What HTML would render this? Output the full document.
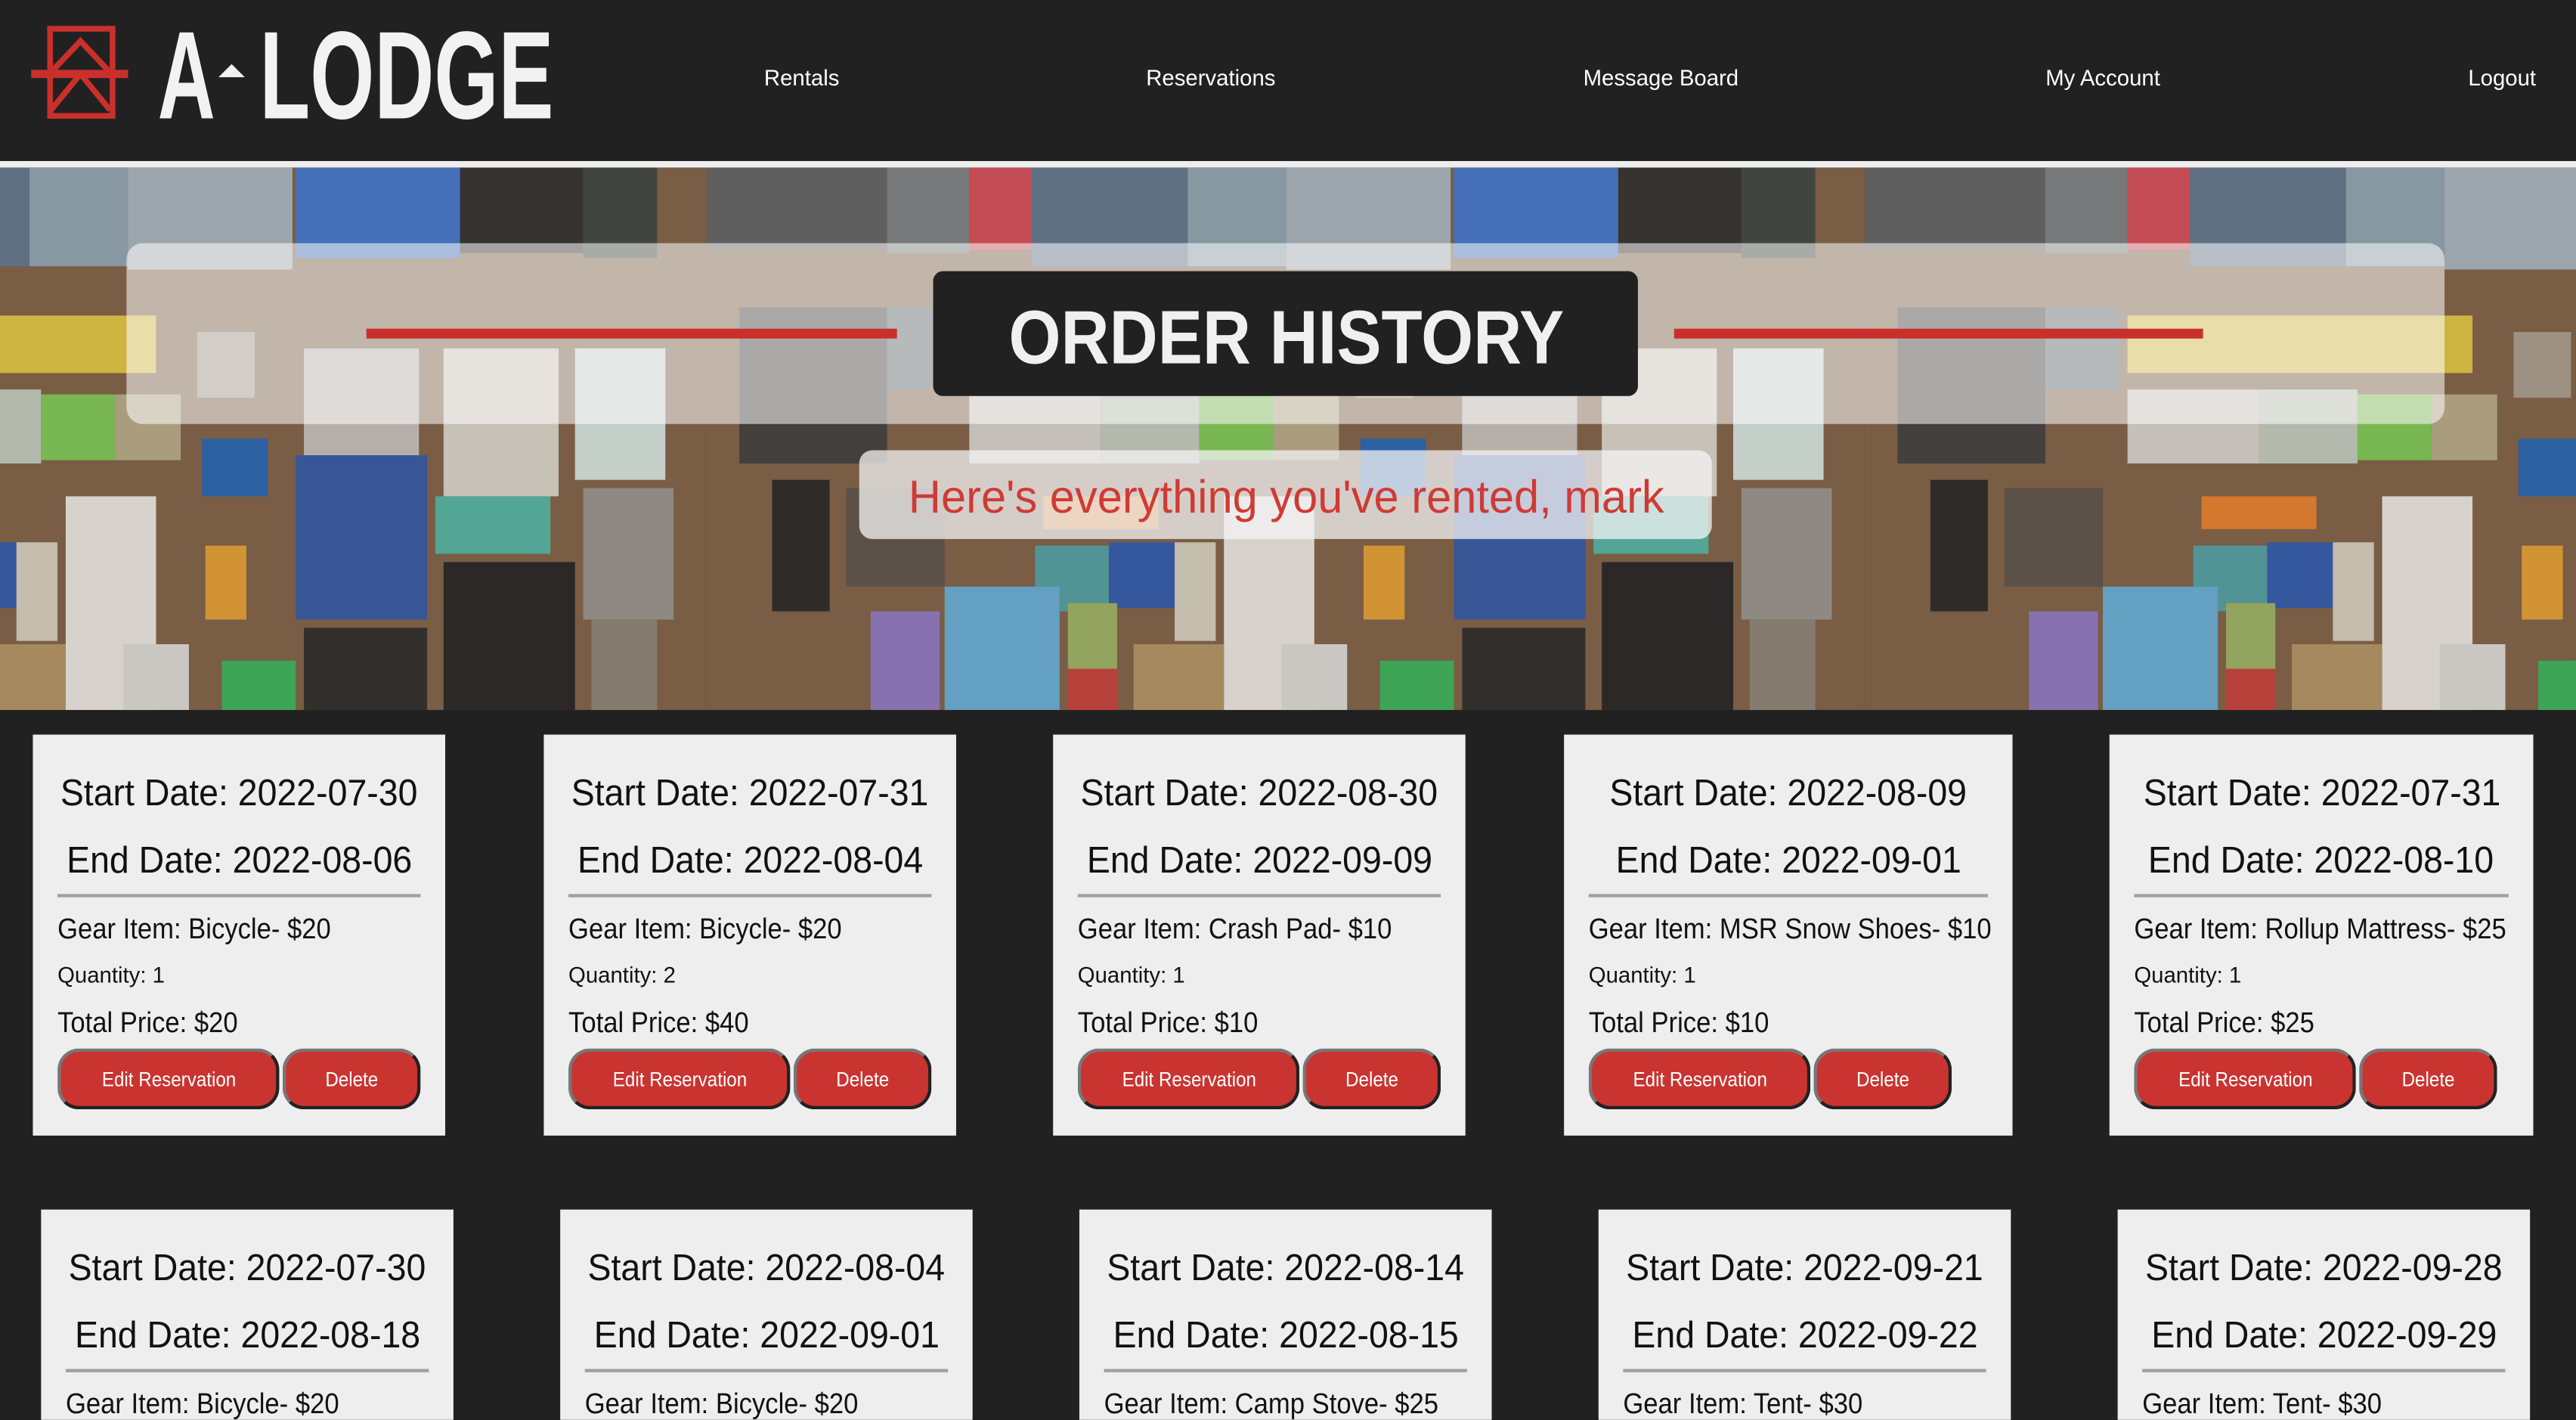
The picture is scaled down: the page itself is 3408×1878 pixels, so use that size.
<!DOCTYPE html>
<html><head><meta charset="utf-8">
<style>
html,body{margin:0;padding:0;background:#212121;overflow:hidden;width:3408px;height:1878px}
#w{position:absolute;left:0;top:0;width:1568px;height:864px;transform:scale(2.173469);transform-origin:0 0;background:#212121;font-family:"Liberation Sans",sans-serif;overflow:hidden}
.nav{position:absolute;top:40px;color:#fff;font-family:"Liberation Sans",sans-serif;font-size:13.5px;transform:translateX(-50%);white-space:nowrap}
.card{position:absolute;background:#eeeeee;box-sizing:border-box;padding:0 15px;color:#111;overflow:hidden}
.s{display:inline-block;transform:scaleX(.91);transform-origin:0 50%;white-space:nowrap}
.card .d{display:flex;justify-content:center;font-size:22.5px;line-height:22px;white-space:nowrap}
.card .d .s{transform:scaleX(.95);transform-origin:50% 50%}
.card .d1{margin-top:25px}
.card .d2{margin-top:19px}
.card hr{border:0;border-top:2px solid #a0a0a0;margin:9px 0 0 0}
.card .g{font-size:17.5px;margin-top:9px;line-height:20px;white-space:nowrap}
.card .q{font-size:13.5px;margin-top:11px;line-height:16px}
.card .t{font-size:17.5px;margin-top:10px;line-height:20px}
.btns{margin-top:6px;display:flex;gap:2px}
.b{height:37px;box-sizing:border-box;background:#c93431;color:#fff;font-size:12.5px;display:flex;align-items:center;justify-content:center;border-radius:13px;border:2px solid #222;border-top-color:#777;border-left-color:#777}
.b .s{transform:scaleX(.89);transform-origin:50% 50%}
.e{width:135px}.x{width:84px}
</style></head><body><div id="w">
<svg style="position:absolute;left:0;top:0" width="360" height="98">
 <g fill="none" stroke="#c9302c" stroke-width="3.5">
  <rect x="30.5" y="17.5" width="38" height="53"/>
  <polyline points="31,44 49,25 67,44"/>
  <polyline points="31,67 49,45 67,67"/>
 </g>
 <rect x="19" y="42.5" width="59" height="5" fill="#c9302c"/>
 <text x="96" y="72" fill="#f2f2f2" font-family="Liberation Sans,sans-serif" font-weight="bold" font-size="76" textLength="35" lengthAdjust="spacingAndGlyphs">A</text>
 <polygon points="133,47 141,39 149,47" fill="#f2f2f2"/>
 <text x="158" y="72" fill="#f2f2f2" font-family="Liberation Sans,sans-serif" font-weight="bold" font-size="76" textLength="179" lengthAdjust="spacingAndGlyphs">LODGE</text>
</svg>
<div class="nav" style="left:488px">Rentals</div>
<div class="nav" style="left:737px">Reservations</div>
<div class="nav" style="left:1011px">Message Board</div>
<div class="nav" style="left:1280px">My Account</div>
<div class="nav" style="left:1523px">Logout</div>
<div style="position:absolute;left:0;top:98px;width:1568px;height:4px;background:#eeeeee"></div>
<svg style="position:absolute;left:0;top:102px" width="1568" height="330">
 <defs>
  <g id="tile">
   <rect x="0" y="0" width="705" height="330" fill="#7d5f45"/>
   <rect x="0" y="0" width="110" height="50" fill="#5d6166"/>
   <rect x="110" y="0" width="50" height="52" fill="#7b7f84"/>
   <rect x="160" y="0" width="38" height="50" fill="#d84a57"/>
   <rect x="198" y="0" width="95" height="60" fill="#5f7690"/>
   <rect x="293" y="0" width="60" height="60" fill="#8fa6b8"/>
   <rect x="353" y="0" width="100" height="62" fill="#a9b8c4"/>
   <rect x="455" y="0" width="100" height="55" fill="#3f74d4"/>
   <rect x="555" y="0" width="75" height="52" fill="#2b2b2d"/>
   <rect x="630" y="0" width="45" height="55" fill="#38433e"/>
   <rect x="20" y="85" width="90" height="95" fill="#3c3b3c"/>
   <rect x="110" y="85" width="45" height="50" fill="#5d6b70"/>
   <rect x="160" y="90" width="210" height="35" fill="#e4c93f"/>
   <rect x="160" y="135" width="80" height="45" fill="#d8d6d2"/>
   <rect x="240" y="135" width="60" height="45" fill="#c4cfc2"/>
   <rect x="300" y="138" width="45" height="40" fill="#7ccc55"/>
   <rect x="345" y="138" width="40" height="40" fill="#b9ac8a"/>
   <rect x="40" y="190" width="35" height="80" fill="#222"/>
   <rect x="85" y="195" width="60" height="60" fill="#5a5048"/>
   <rect x="205" y="200" width="70" height="20" fill="#ec7e2a"/>
   <rect x="200" y="230" width="45" height="40" fill="#4ea0a8"/>
   <rect x="245" y="228" width="40" height="40" fill="#2a57b0"/>
   <rect x="285" y="228" width="25" height="60" fill="#d8d2c4"/>
   <rect x="315" y="200" width="55" height="130" fill="#efeeea"/>
   <rect x="100" y="270" width="42" height="60" fill="#8f77c8"/>
   <rect x="145" y="255" width="70" height="75" fill="#62b0dc"/>
   <rect x="220" y="265" width="30" height="40" fill="#9cb562"/>
   <rect x="220" y="305" width="30" height="25" fill="#c83c38"/>
   <rect x="260" y="290" width="55" height="40" fill="#b59466"/>
   <rect x="350" y="290" width="40" height="40" fill="#e0e0de"/>
   <rect x="395" y="100" width="35" height="40" fill="#a99e92"/>
   <rect x="398" y="165" width="40" height="35" fill="#2062b8"/>
   <rect x="400" y="230" width="25" height="45" fill="#e8a030"/>
   <rect x="410" y="300" width="45" height="30" fill="#35b55a"/>
   <rect x="460" y="110" width="70" height="70" fill="#c8c4c0"/>
   <rect x="455" y="175" width="80" height="100" fill="#2e55a8"/>
   <rect x="460" y="280" width="75" height="50" fill="#262628"/>
   <rect x="545" y="110" width="70" height="90" fill="#dcd8d0"/>
   <rect x="540" y="200" width="70" height="35" fill="#4fb7a8"/>
   <rect x="545" y="240" width="80" height="90" fill="#1e1e20"/>
   <rect x="625" y="110" width="55" height="80" fill="#d9eae6"/>
   <rect x="630" y="195" width="55" height="80" fill="#979590"/>
   <rect x="635" y="275" width="40" height="55" fill="#8c8478"/>
  </g>
 </defs>
 <use href="#tile" x="-275"/>
 <use href="#tile" x="430"/>
 <use href="#tile" x="1135"/>
 <rect x="0" y="0" width="1568" height="330" fill="#6b5a4a" fill-opacity="0.18"/>
 <rect x="77" y="46" width="1411" height="110" rx="10" fill="#fff" fill-opacity="0.55"/>
 <rect x="223" y="98" width="323" height="6" fill="#c9302c"/>
 <rect x="1019" y="98" width="322" height="6" fill="#c9302c"/>
 <rect x="568" y="63" width="429" height="76" rx="6" fill="#212121"/>
 <text x="783" y="119" text-anchor="middle" fill="#f0f0f0" font-family="Liberation Sans,sans-serif" font-weight="bold" font-size="46" textLength="338" lengthAdjust="spacingAndGlyphs">ORDER HISTORY</text>
 <rect x="523" y="172" width="519" height="54" rx="8" fill="#f4f4f4" fill-opacity="0.75"/>
 <text x="783" y="210" text-anchor="middle" fill="#d03a35" font-family="Liberation Sans,sans-serif" font-size="28" textLength="460" lengthAdjust="spacingAndGlyphs">Here's everything you've rented, mark</text>
</svg>
<div class="card" style="left:20px;top:447px;width:251px;height:244px"><div class="d d1"><span class="s">Start Date: 2022-07-30</span></div><div class="d d2"><span class="s">End Date: 2022-08-06</span></div><hr><div class="g"><span class="s">Gear Item: Bicycle- $20</span></div><div class="q">Quantity: 1</div><div class="t"><span class="s">Total Price: $20</span></div><div class="btns"><div class="b e"><span class="s">Edit Reservation</span></div><div class="b x"><span class="s">Delete</span></div></div></div>
<div class="card" style="left:331px;top:447px;width:251px;height:244px"><div class="d d1"><span class="s">Start Date: 2022-07-31</span></div><div class="d d2"><span class="s">End Date: 2022-08-04</span></div><hr><div class="g"><span class="s">Gear Item: Bicycle- $20</span></div><div class="q">Quantity: 2</div><div class="t"><span class="s">Total Price: $40</span></div><div class="btns"><div class="b e"><span class="s">Edit Reservation</span></div><div class="b x"><span class="s">Delete</span></div></div></div>
<div class="card" style="left:641px;top:447px;width:251px;height:244px"><div class="d d1"><span class="s">Start Date: 2022-08-30</span></div><div class="d d2"><span class="s">End Date: 2022-09-09</span></div><hr><div class="g"><span class="s">Gear Item: Crash Pad- $10</span></div><div class="q">Quantity: 1</div><div class="t"><span class="s">Total Price: $10</span></div><div class="btns"><div class="b e"><span class="s">Edit Reservation</span></div><div class="b x"><span class="s">Delete</span></div></div></div>
<div class="card" style="left:952px;top:447px;width:273px;height:244px"><div class="d d1"><span class="s">Start Date: 2022-08-09</span></div><div class="d d2"><span class="s">End Date: 2022-09-01</span></div><hr><div class="g"><span class="s">Gear Item: MSR Snow Shoes- $10</span></div><div class="q">Quantity: 1</div><div class="t"><span class="s">Total Price: $10</span></div><div class="btns"><div class="b e"><span class="s">Edit Reservation</span></div><div class="b x"><span class="s">Delete</span></div></div></div>
<div class="card" style="left:1284px;top:447px;width:258px;height:244px"><div class="d d1"><span class="s">Start Date: 2022-07-31</span></div><div class="d d2"><span class="s">End Date: 2022-08-10</span></div><hr><div class="g"><span class="s">Gear Item: Rollup Mattress- $25</span></div><div class="q">Quantity: 1</div><div class="t"><span class="s">Total Price: $25</span></div><div class="btns"><div class="b e"><span class="s">Edit Reservation</span></div><div class="b x"><span class="s">Delete</span></div></div></div>
<div class="card" style="left:25px;top:736px;width:251px;height:128px"><div class="d d1"><span class="s">Start Date: 2022-07-30</span></div><div class="d d2"><span class="s">End Date: 2022-08-18</span></div><hr><div class="g"><span class="s">Gear Item: Bicycle- $20</span></div></div>
<div class="card" style="left:341px;top:736px;width:251px;height:128px"><div class="d d1"><span class="s">Start Date: 2022-08-04</span></div><div class="d d2"><span class="s">End Date: 2022-09-01</span></div><hr><div class="g"><span class="s">Gear Item: Bicycle- $20</span></div></div>
<div class="card" style="left:657px;top:736px;width:251px;height:128px"><div class="d d1"><span class="s">Start Date: 2022-08-14</span></div><div class="d d2"><span class="s">End Date: 2022-08-15</span></div><hr><div class="g"><span class="s">Gear Item: Camp Stove- $25</span></div></div>
<div class="card" style="left:973px;top:736px;width:251px;height:128px"><div class="d d1"><span class="s">Start Date: 2022-09-21</span></div><div class="d d2"><span class="s">End Date: 2022-09-22</span></div><hr><div class="g"><span class="s">Gear Item: Tent- $30</span></div></div>
<div class="card" style="left:1289px;top:736px;width:251px;height:128px"><div class="d d1"><span class="s">Start Date: 2022-09-28</span></div><div class="d d2"><span class="s">End Date: 2022-09-29</span></div><hr><div class="g"><span class="s">Gear Item: Tent- $30</span></div></div>
</div></body></html>
